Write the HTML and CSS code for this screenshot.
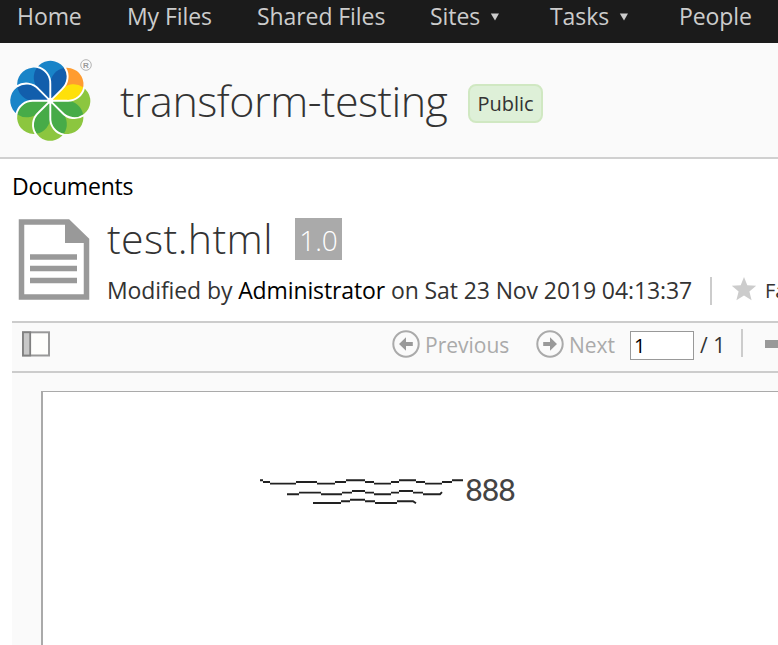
FILE: index.html
```html
<!DOCTYPE html>
<html lang="en">
<head>
<meta charset="utf-8">
<title>transform-testing</title>
<link rel="stylesheet" href="styles.css">
</head>
<body>
<nav class="nav">
  <a class="home">Home</a>
  <a class="files">My Files</a>
  <a class="shared">Shared Files</a>
  <a class="menu sites">Sites<svg width="10" height="8" viewBox="0 0 10 8"><path d="M.8 .5H9L5 7.5z" fill="#ccc"/></svg></a>
  <a class="menu tasks">Tasks<svg width="10" height="8" viewBox="0 0 10 8"><path d="M.8 .5H9L5 7.5z" fill="#ccc"/></svg></a>
  <a class="people">People</a>
</nav>
<header class="site">
  <svg class="logo" width="96" height="100" viewBox="0 0 96 100">
    <defs>
      <path id="petal" d="M0 0V-16.55A16.55 16.55 0 0 0-13.6-32.8A16.55 16.55 0 1 1 11.7-11.7Z"/>
      <path id="lens" d="M0 0V-16.55A16.55 16.55 0 0 1 13.6-32.8A16.55 16.55 0 0 1 11.7-11.7Z"/>
      <path id="edge" d="M0 0L11.7-11.7A16.55 16.55 0 0 0 14.4-33.5" fill="none" stroke="#fff" stroke-width="1.9"/>
    </defs>
    <g transform="translate(50.3 50.8)">
      <g fill="#1984c8"><use href="#petal"/><use href="#petal" transform="rotate(-45)"/><use href="#petal" transform="rotate(-90)"/></g>
      <use href="#petal" transform="rotate(45)" fill="#ff9c30"/>
      <g fill="#8cc63f"><use href="#petal" transform="rotate(90)"/><use href="#petal" transform="rotate(135)"/><use href="#petal" transform="rotate(180)"/><use href="#petal" transform="rotate(225)"/></g>
      <g fill="#125eac"><use href="#lens"/><use href="#lens" transform="rotate(-45)"/><use href="#lens" transform="rotate(-90)"/></g>
      <use href="#lens" transform="rotate(45)" fill="#fee00a"/>
      <g fill="#47ab48"><use href="#lens" transform="rotate(90)"/><use href="#lens" transform="rotate(135)"/><use href="#lens" transform="rotate(180)"/><use href="#lens" transform="rotate(225)"/></g>
      <use href="#edge"/><use href="#edge" transform="rotate(45)"/><use href="#edge" transform="rotate(90)"/><use href="#edge" transform="rotate(135)"/><use href="#edge" transform="rotate(180)"/><use href="#edge" transform="rotate(225)"/><use href="#edge" transform="rotate(270)"/><use href="#edge" transform="rotate(315)"/>
      <circle r="3" fill="#fff"/>
    </g>
    <circle cx="86" cy="15" r="5.3" fill="none" stroke="#aaa" stroke-width=".9"/>
    <text x="86" y="18" text-anchor="middle" class="reg">R</text>
  </svg>
  <h1><span>transform-testing</span></h1>
  <span class="badge">Public</span>
</header>
<main>
  <div class="crumb"><span>Documents</span></div>
  <section class="doc">
    <svg class="thumb" width="72" height="82" viewBox="0 0 72 82">
      <path d="M3.5 3H50L68.5 21V78H3.5Z" fill="#fff" stroke="#999" stroke-width="5.5"/>
      <path d="M47 1H51L70 20V24H47Z" fill="#999"/>
      <path d="M12 38H59M12 49.5H59M12 61.5H59" stroke="#999" stroke-width="5.5"/>
    </svg>
    <div class="info">
      <div class="title"><h2>test.html</h2><span class="version">1.0</span></div>
      <div class="meta"><span class="modified">Modified by <b>Administrator</b> on Sat 23 Nov 2019 04:13:37</span><i class="sep"></i>
        <svg class="star" width="26" height="24" viewBox="0 0 26 24"><path d="M13 0l3.3 8.2 8.9.6-6.8 5.7 2.2 8.8L13 18.5l-7.6 4.8 2.2-8.8L.8 8.8l8.9-.6z" fill="#ccc"/></svg>
        <span class="fav">Favorite</span></div>
    </div>
  </section>
  <section class="viewer">
    <div class="toolbar">
      <svg class="side" width="28" height="26" viewBox="0 0 28 26"><rect x="1" y="1.3" width="26" height="23.2" fill="#fefefc" stroke="#999" stroke-width="2"/><rect x="1" y="1.3" width="7.2" height="23.2" fill="#c8c8c8" stroke="#808080" stroke-width="1.8"/></svg>
      <svg class="prev" width="28" height="28" viewBox="0 0 28 28"><circle cx="14" cy="14" r="12.7" fill="none" stroke="#aaa" stroke-width="2"/><path d="M7 14l7-6.8v4.8h6.8v4H14v4.8z" fill="#999"/></svg>
      <span class="prev-label">Previous</span>
      <svg class="next" width="28" height="28" viewBox="0 0 28 28"><circle cx="14" cy="14" r="12.7" fill="none" stroke="#aaa" stroke-width="2"/><path d="M21 14l-7-6.8v4.8H7.2v4H14v4.8z" fill="#999"/></svg>
      <span class="next-label">Next</span>
      <span class="page-input">1</span>
      <span class="total">/ 1</span>
      <i class="sep"></i>
      <i class="minus"></i>
    </div>
    <div class="canvas"><div class="page">
      <svg class="waves" width="206" height="32" viewBox="0 0 206 32" fill="none" stroke="#222" stroke-width="1.9">
        <path d="M1 3.3h3M4 5h7M11 6.6h26M37 5h21M58 6.6h18M76 5h11M87 3.3h19M106 5h9M115 6.6h17M132 5h8M140 3.3h17M157 5h9M166 6.6h17M183 5h10M193 3.3h11"/>
        <path d="M28 17.2h12M40 15.6h22M62 17.2h21M83 15.6h10M93 14h13M106 15.6h9M115 17.2h17M132 15.6h8M140 14h14M154 15.6h10M164 17.2h17l2-2"/>
        <path d="M54 26h28M82 24.3h9M91 22.7h15M106 24.3h10M116 26h22M138 24.3h16l3 2"/>
      </svg>
      <span class="digits">888</span>
    </div></div>
  </section>
</main>
</body>
</html>
```
FILE: styles.css
```css
* { box-sizing: border-box; }
html, body { margin: 0; width: 778px; height: 645px; overflow: hidden; }
body { background: #fff; color: #333; font-family: "Open Sans", sans-serif; font-size: 23px; line-height: 32px; white-space: nowrap; }
svg { display: block; flex: none; }
h1, h2 { margin: 0; font-weight: 300; }
.nav { display: flex; height: 43px; background: #1b1b1b; color: #ccc; padding-left: 17px; letter-spacing: -.08px; }
.nav a { flex: none; height: 32px; }
.home { width: 110px; }
.files { width: 130px; }
.shared { width: 173px; }
.menu { display: flex; gap: 10px; }
.menu svg { margin-top: 13px; }
.sites { width: 120px; }
.tasks { width: 129px; }
.site { display: flex; height: 116px; background: #fafafa; border-bottom: 2px solid #d0d0d0; }
.logo { margin-top: 7px; }
.reg { font: 700 8px "Liberation Sans", sans-serif; fill: #999; }
.site h1 { width: 372px; padding-left: 24px; margin-top: 28px; font-size: 43px; line-height: 60px; letter-spacing: -.5px; }
.badge { width: 75px; height: 39px; margin-top: 41px; background: #def0d8; border: 2px solid #d0e8c2; border-radius: 8px; font-size: 20px; line-height: 35px; text-align: center; }
.crumb { height: 60px; padding: 11px 0 0 12px; color: #000; letter-spacing: -.2px; }
.doc { display: flex; height: 102px; padding-left: 18px; overflow-x: clip; }
.info { padding-left: 17px; }
.title { display: flex; height: 55px; }
.title h2 { width: 188px; font-size: 41px; line-height: 56px; margin-top: -9px; letter-spacing: .4px; }
.version { width: 47px; height: 42px; margin-top: -1px; background: #aaa; color: #fff; font-size: 28px; font-weight: 300; line-height: 45px; text-align: center; }
.meta { display: flex; }
.modified { width: 603px; letter-spacing: -.11px; }
.meta b { font-weight: 400; color: #000; }
.sep { flex: none; width: 2px; height: 28px; background: #ccc; }
.meta .sep { margin-top: 3px; }
.star { margin: 3px 8px 0 19px; }
.fav { font-size: 20px; margin-top: 1px; }
.viewer { margin-left: 12px; background: #fafafa; }
.toolbar { display: flex; height: 52px; border-top: 2px solid #ccc; border-bottom: 2px solid #ccc; font-size: 21px; overflow: hidden; }
.toolbar > * { flex: none; }
.side { margin: 8px 342px 0 10px; }
.prev, .next { margin-top: 7px; }
.prev-label, .next-label { color: #aaa; margin: 6px 0 0 5px; }
.prev-label { width: 111px; }
.next-label { width: 61px; }
.page-input { width: 64px; height: 29px; margin-top: 8px; border: 1px solid #999; background: #fff; padding-left: 3px; line-height: 28px; color: #000; font-size: 20px; }
.total { width: 47px; padding: 6px 0 0 6px; }
.toolbar .sep { margin-top: 6px; }
.minus { width: 30px; height: 8px; margin: 17px 0 0 22px; background: #999; }
.canvas { height: 274px; padding: 18px 0 0 29px; }
.page { display: flex; height: 256px; border-top: 1px solid #aaa; border-left: 2px solid #aaa; background: #fff; }
.waves { margin: 85px 0 0 216px; }
.digits { margin-top: 82px; font: 32px/32px Roboto, sans-serif; letter-spacing: -1.5px; color: #444; }
```
